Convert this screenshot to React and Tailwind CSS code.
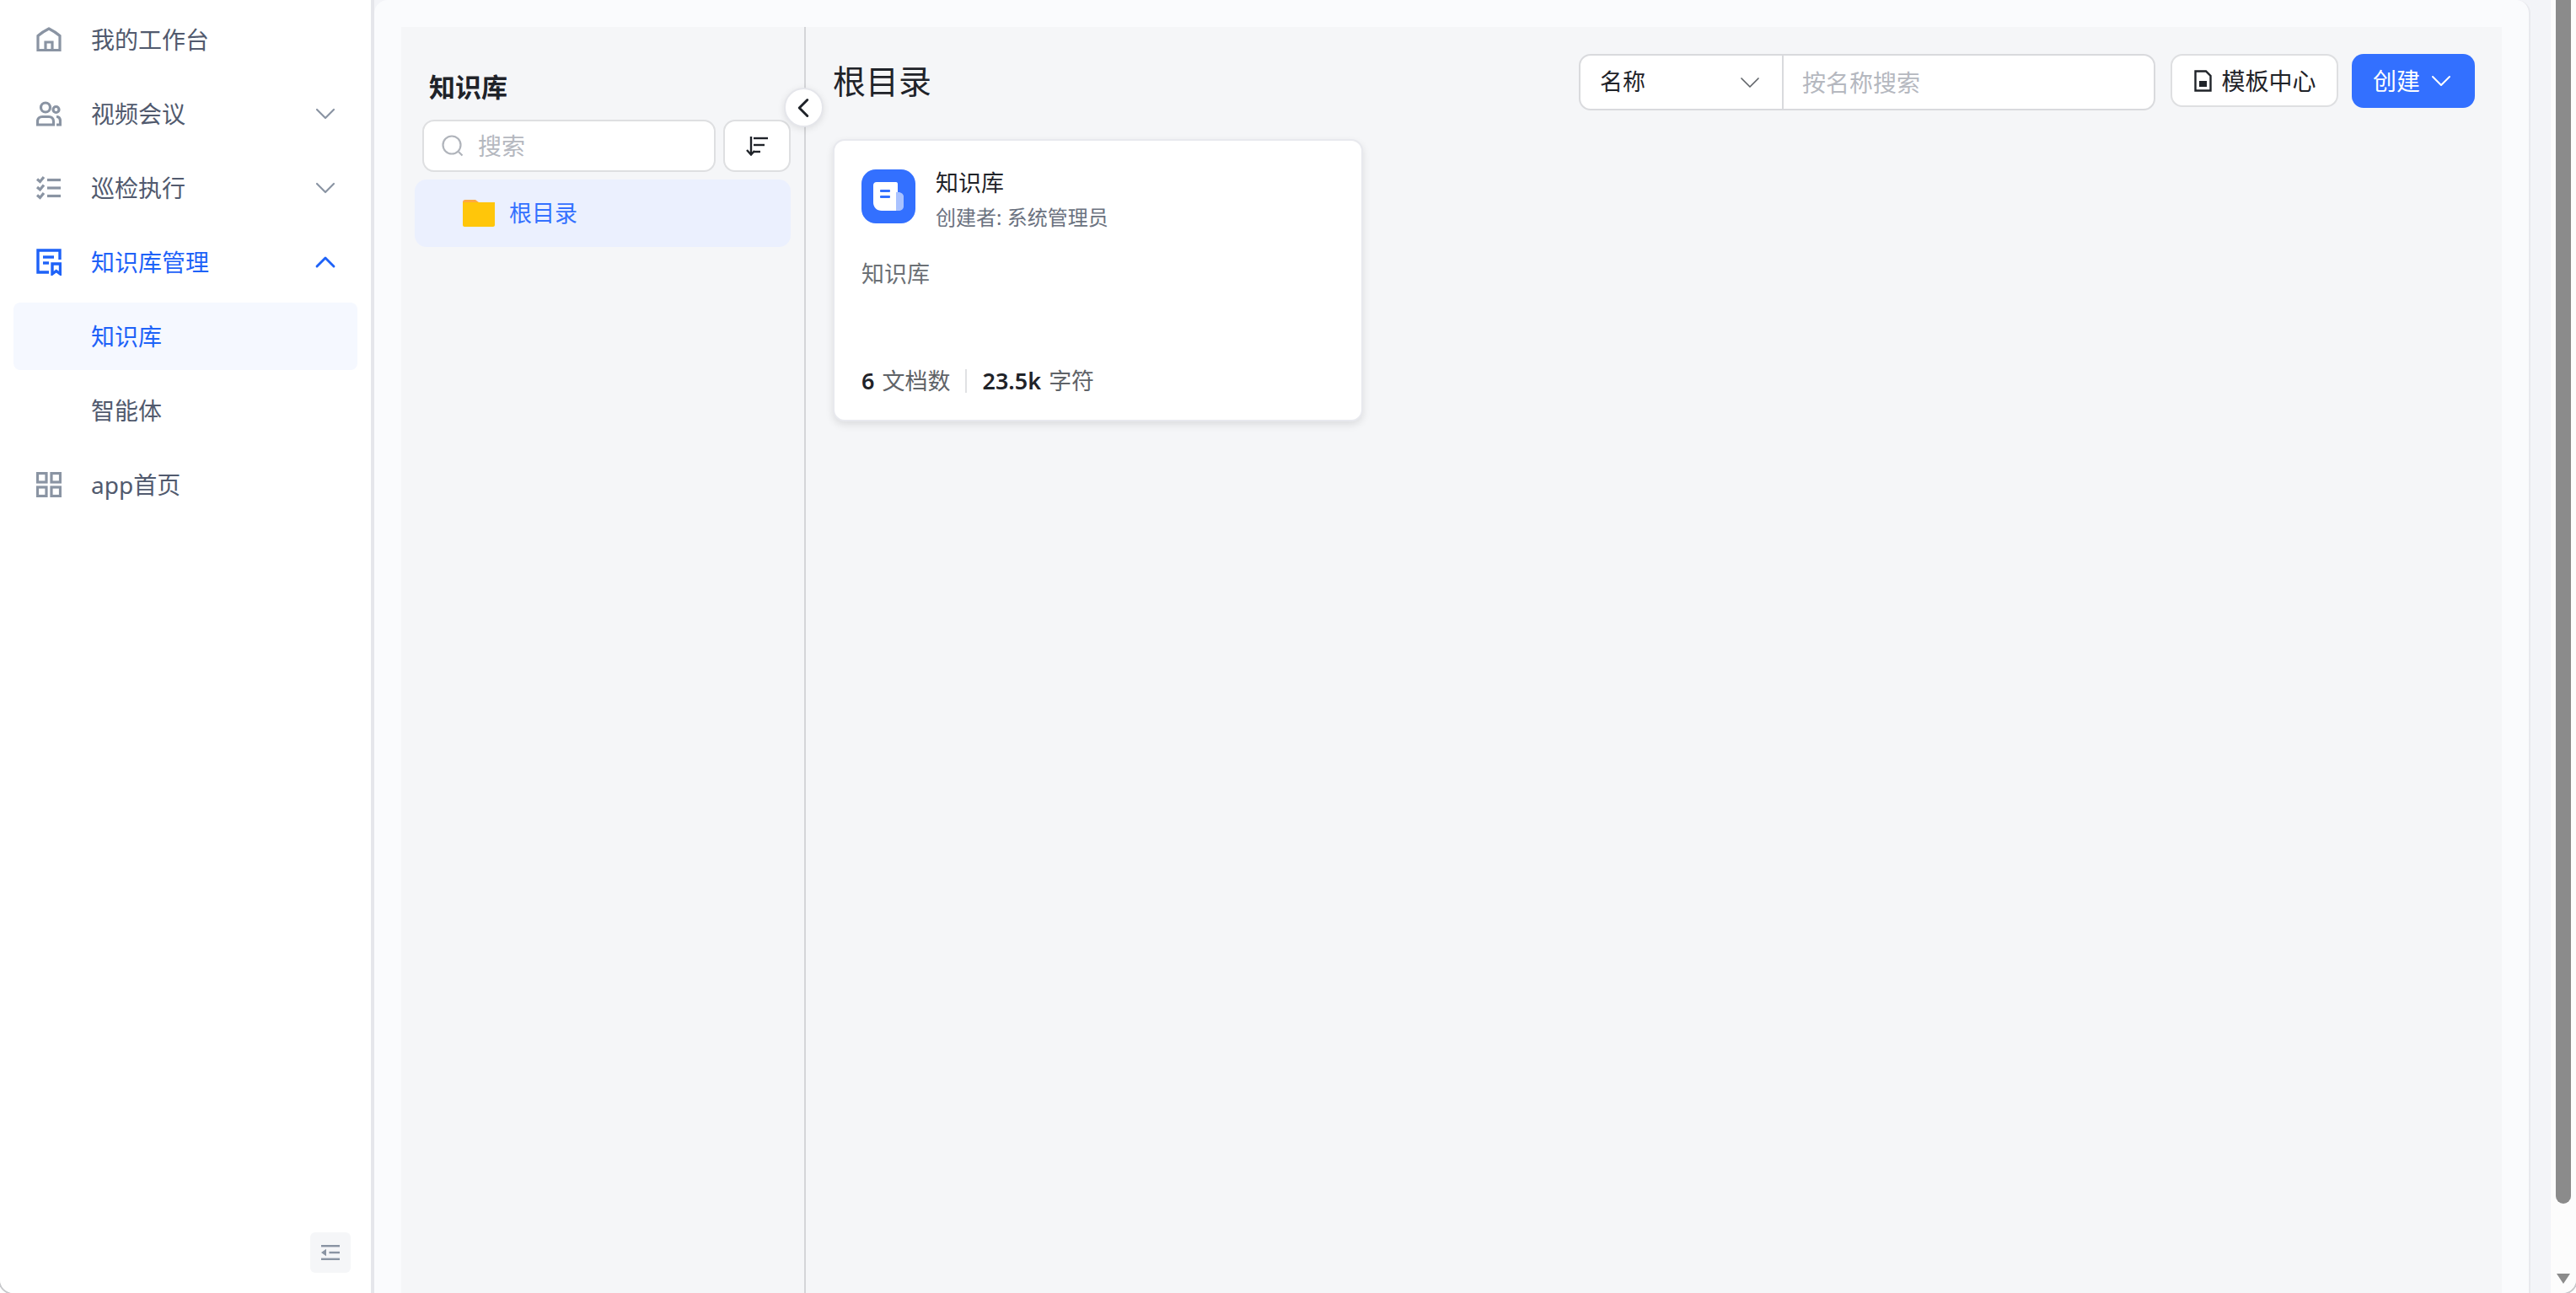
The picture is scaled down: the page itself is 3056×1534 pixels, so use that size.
import { ChevronDown, ChevronUp, ChevronLeft } from 'lucide-react';

function HomeIcon() {
  return (
    <svg width="30" height="30" viewBox="0 0 30 30" fill="none" stroke="#8a94a3" strokeWidth="3.2">
      <path d="M2 27.500V10.500C6 7 10 4.500 15 2C20 4.500 24 7 28 10.500V27.500H2Z" />
      <path d="M11 27V18H19V27" />
    </svg>
  );
}

function UsersIcon() {
  return (
    <svg width="30" height="30" viewBox="0 0 30 30" fill="none" stroke="#8a94a3" strokeWidth="3.200">
      <circle cx="11" cy="7.500" r="5.500" />
      <path d="M1.500 28V24C1.500 20.500 4 18.500 7 18.500H15C18 18.500 20.500 20.500 20.500 24V28H1.500Z" />
      <circle cx="23.500" cy="10" r="3.500" />
      <path d="M24 18.500C27 18.500 28.500 20.500 28.500 24V28H24" />
    </svg>
  );
}

function ChecklistIcon() {
  return (
    <svg width="30" height="30" viewBox="0 0 30 30" fill="none" stroke="#8a94a3" strokeWidth="3.200">
      <path d="M1 4.500L4.500 7.500L9 2" />
      <path d="M1 14L4.500 17L9 11.500" />
      <path d="M1 23.500L4.500 26.500L9 21" />
      <path d="M13 5.500H29" />
      <path d="M13 15H29" />
      <path d="M13 24.500H29" />
    </svg>
  );
}

function KnowledgeIcon() {
  return (
    <svg width="30" height="32" viewBox="0 0 30 32" fill="none" stroke="#1e62f8" strokeWidth="3.400">
      <path d="M15 28H2V2H28V13" />
      <path d="M8 10H21" />
      <path d="M8 17H15" />
      <path d="M19 18H28.500V30L23.700 26.500L19 30V18Z" />
    </svg>
  );
}

function GridIcon() {
  return (
    <svg width="30" height="30" viewBox="0 0 30 30" fill="none" stroke="#8a94a3" strokeWidth="3.200">
      <rect x="1.500" y="1.500" width="10.500" height="10.500" />
      <rect x="18" y="1.500" width="10.500" height="10.500" />
      <rect x="1.500" y="18" width="10.500" height="10.500" />
      <rect x="18" y="18" width="10.500" height="10.500" />
    </svg>
  );
}

function NavRow({ icon, label, active, sub, chevron }) {
  return (
    <div className={`flex h-[80px] items-center rounded-[8px] pr-[18px] ${sub ? 'pl-[92px]' : 'pl-[27px]'} ${sub && active ? 'bg-[#f5f8ff]' : ''}`}>
      {icon && <div className="mr-[35px] flex w-[30px] items-center justify-center">{icon}</div>}
      <span className={`flex-1 text-[28px] ${active ? 'text-[#1e62f8]' : 'text-[#515a6e]'}`}>{label}</span>
      {chevron === 'down' && <ChevronDown size={40} strokeWidth={1.3} className="text-[#8a94a3]" />}
      {chevron === 'up' && <ChevronUp size={40} strokeWidth={1.7} className="text-[#1e62f8]" />}
    </div>
  );
}

function Sidebar() {
  return (
    <aside className="flex w-[444px] shrink-0 flex-col border-r-4 border-[#e5e6eb] bg-white">
      <nav className="flex flex-col gap-[8px] px-[16px] pt-[7px]">
        <NavRow icon={<HomeIcon />} label="我的工作台" />
        <NavRow icon={<UsersIcon />} label="视频会议" chevron="down" />
        <NavRow icon={<ChecklistIcon />} label="巡检执行" chevron="down" />
        <NavRow icon={<KnowledgeIcon />} label="知识库管理" active chevron="up" />
        <NavRow sub active label="知识库" />
        <NavRow sub label="智能体" />
        <NavRow icon={<GridIcon />} label="app首页" />
      </nav>
      <div className="mt-auto flex justify-end pr-[24px] pb-[24px]">
        <button className="flex h-[48px] w-[48px] items-center justify-center rounded-[6px] bg-[#f5f6f8]">
          <svg width="22" height="20" viewBox="0 0 22 20" fill="#8a94a3">
            <rect x="0" y="1" width="22" height="2.400" />
            <rect x="9.500" y="8.800" width="12.500" height="2.400" />
            <rect x="0" y="16.600" width="22" height="2.400" />
            <path d="M0 10L6 5.800V14.200Z" />
          </svg>
        </button>
      </div>
    </aside>
  );
}

function TreePanel() {
  return (
    <div className="w-[478px] shrink-0 pl-[16px] pr-[16px] pt-[52px]">
      <h2 className="pl-[17px] text-[31px] leading-[38px] font-bold text-[#1f2329]">知识库</h2>
      <div className="mt-[20px] flex gap-[9px] pl-[9px]">
        <div className="flex h-[62px] flex-1 items-center rounded-[14px] border-2 border-[#dedfe1] bg-white pl-[21px]">
          <svg width="26" height="26" viewBox="0 0 26 26" fill="none" stroke="#b0b4bb" strokeWidth="2.200">
            <circle cx="12" cy="12" r="10.500" />
            <path d="M20 20L24.500 24.500" />
          </svg>
          <span className="ml-[17px] text-[28px] text-[#b5b8bf]">搜索</span>
        </div>
        <button className="flex h-[62px] w-[80px] items-center justify-center rounded-[14px] border-2 border-[#dedfe1] bg-white">
          <svg width="26" height="24" viewBox="0 0 26 24" fill="none" stroke="#1f2329" strokeWidth="2.400">
            <path d="M6 1V22" />
            <path d="M1 17L6 22.500L10 18" />
            <path d="M9 3H26" />
            <path d="M9 11H22" />
            <path d="M9 19H17" />
          </svg>
        </button>
      </div>
      <div className="mt-[9px] flex h-[80px] items-center rounded-[14px] bg-[#ebf0fe] pl-[57px]">
        <svg width="38" height="32" viewBox="0 0 38 32">
          <path d="M0 3C0 1 1 0 3 0H15L19 3V8H0Z" fill="#ffa940" />
          <path d="M0 3H38V30C38 31 37 32 36 32H2C1 32 0 31 0 30Z" fill="#ffc60a" />
        </svg>
        <span className="ml-[17px] text-[27px] text-[#3370ff]">根目录</span>
      </div>
    </div>
  );
}

function KnowledgeCard() {
  return (
    <div className="mt-[34px] flex h-[335px] w-[629px] flex-col rounded-[14px] border-2 border-[#e8e9ee] bg-white pl-[32px] shadow-[0_4px_10px_rgba(0,0,0,0.1)]">
      <div className="mt-[34px] flex items-start gap-[24px]">
        <div className="flex h-[64px] w-[64px] items-center justify-center">
          <svg width="64" height="64" viewBox="0 0 64 64">
            <rect width="64" height="64" rx="17" fill="#3370ff" />
            <path d="M14 19C14 16.500 15.500 15 18 15H41C42.500 15 43 16 43 17.500V49H24C18 49 14 45 14 39Z" fill="#fff" />
            <path d="M41 27H44C47 27 50 29.500 50 32V44C50 47 47 49 44 49H41Z" fill="#a9c2ff" />
            <rect x="22" y="24" width="12" height="3" rx="1" fill="#3370ff" />
            <rect x="22" y="31" width="12" height="3" rx="1" fill="#3370ff" />
          </svg>
        </div>
        <div className="flex flex-col">
          <span className="text-[27px] leading-[32px] text-[#1f2329]">知识库</span>
          <span className="mt-[9px] text-[24px] leading-[32px] text-[#6b7280]">创建者: 系统管理员</span>
        </div>
      </div>
      <p className="mt-[31px] text-[27px] leading-[40px] text-[#6b7075]">知识库</p>
      <div className="mt-auto mb-[26px] flex items-center text-[27px] leading-[40px]">
        <span className="font-semibold text-[#1f2329]">6</span>
        <span className="ml-[9px] text-[#5f6368]">文档数</span>
        <span className="mx-[18px] h-[28px] w-[2px] bg-[#e0e1e4]" />
        <span className="font-semibold text-[#1f2329]">23.5k</span>
        <span className="ml-[9px] text-[#5f6368]">字符</span>
      </div>
    </div>
  );
}

function ContentPanel() {
  return (
    <div className="flex min-w-0 flex-1 flex-col pl-[32px] pr-[32px] pt-[32px]">
      <div className="flex items-start">
        <h1 className="flex-1 pt-[6px] text-[39px] leading-[52px] text-[#1f2329]">根目录</h1>
        <div className="flex h-[67px] w-[684px] rounded-[14px] border-2 border-[#d9dadd] bg-white">
          <div className="flex w-[241px] items-center justify-between border-r-2 border-[#d9dadd] pl-[23px] pr-[18px]">
            <span className="text-[27px] text-[#1f2329]">名称</span>
            <ChevronDown size={40} strokeWidth={1} className="text-[#5f6368]" />
          </div>
          <span className="flex items-center pl-[22px] text-[28px] text-[#b5b8bf]">按名称搜索</span>
        </div>
        <button className="ml-[18px] flex h-[63px] w-[199px] items-center justify-center gap-[11px] rounded-[14px] border-2 border-[#dedfe1] bg-white pl-[2px]">
          <svg width="21" height="26" viewBox="0 0 21 26" fill="none" stroke="#1f2329" strokeWidth="2.400">
            <path d="M1.500 1.500H14L19.500 7V24.500H1.500Z" />
            <rect x="6" y="13" width="9" height="7" fill="#1f2329" stroke="none" />
          </svg>
          <span className="text-[28px] text-[#1f2329]">模板中心</span>
        </button>
        <button className="ml-[16px] flex h-[64px] w-[146px] items-center justify-center gap-[5px] rounded-[14px] bg-[#3370ff] pl-[5px]">
          <span className="text-[28px] text-white">创建</span>
          <ChevronDown size={40} strokeWidth={1.2} className="text-white" />
        </button>
      </div>
      <KnowledgeCard />
    </div>
  );
}

export default function App() {
  return (
    <div className="h-[1534px] w-[3056px] overflow-hidden bg-white" style={{ fontFamily: '"Noto Sans", "Noto Sans CJK SC", sans-serif' }}>
      <div className="-ml-[2px] flex h-[1536px] w-[3060px] overflow-hidden rounded-b-[18px] border-x-2 border-b-2 border-[#c8c9cc]">
        <Sidebar />
        <div className="flex min-w-0 flex-1 bg-[#f3f4f8] pr-[24px]">
          <main className="flex min-w-0 flex-1 rounded-t-[16px] border-r-2 border-[#e8e9ee] bg-[#fafbfd] px-[32px] pt-[32px]">
            <div className="relative flex flex-1 bg-[#f5f6f8]">
              <TreePanel />
              <div className="w-[2px] shrink-0 bg-[#d4d5d8]" />
              <button className="absolute left-[454px] top-[72px] flex h-[47px] w-[47px] items-center justify-center rounded-full border-2 border-[#e5e6eb] bg-white pr-[2px] shadow-[0_2px_8px_rgba(0,0,0,0.1)]">
                <ChevronLeft size={38} strokeWidth={1.9} className="text-[#1f2329]" />
              </button>
              <ContentPanel />
            </div>
          </main>
        </div>
        <div className="flex w-[30px] shrink-0 flex-col bg-[#fcfcfc] pl-[6px]">
          <div className="h-[1428px] w-[18px] rounded-b-full bg-[#8b8b8b]" />
          <svg className="mt-[83px]" width="18" height="12" viewBox="0 0 18 12" fill="#8b8b8b">
            <path d="M1 0H17L9 12Z" />
          </svg>
        </div>
      </div>
    </div>
  );
}
